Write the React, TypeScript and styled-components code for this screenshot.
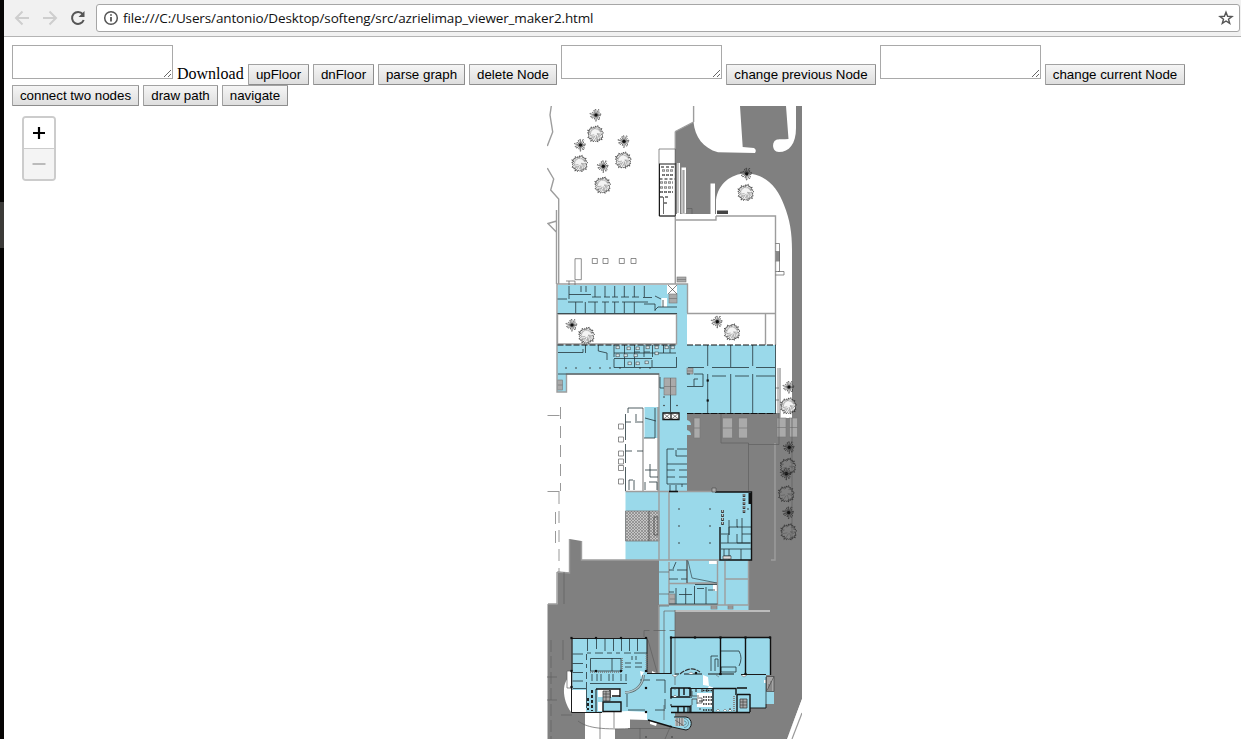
import React from "react";
import styled, { createGlobalStyle } from "styled-components";

const GlobalStyle = createGlobalStyle`
  * { box-sizing: border-box; }
  body { margin: 0; background: #fff; overflow: hidden; }
`;

const Desktop = styled.div`
  display: flex;
  width: 1241px;
  height: 739px;
  overflow: hidden;
`;
const DesktopEdge = styled.div`
  width: 4px;
  flex: none;
  background: linear-gradient(#060504 202px, #3b3a38 202px, #3b3a38 248px, #060504 248px);
`;
const Browser = styled.div`
  flex: 1;
  min-width: 0;
  display: flex;
  flex-direction: column;
`;
const AddressBar = styled.header`
  display: flex;
  align-items: center;
  height: 37px;
  flex: none;
  padding: 0 1px 1px 10px;
  background: #f1f1f1;
  border-bottom: 1px solid #b4b4b4;
`;
const NavIcon = styled.svg<{ $gap: number }>`
  width: 16px;
  height: 16px;
  flex: none;
  margin-right: ${(p) => p.$gap}px;
`;
const UrlBox = styled.div`
  display: flex;
  align-items: center;
  flex: 1;
  height: 28px;
  padding: 0 5px 0 6px;
  background: #fff;
  border: 1px solid #a6a6a6;
  border-radius: 3px;
`;
const Url = styled.span`
  flex: 1;
  margin-left: 4px;
  font: 13.5px/20px "Open Sans", sans-serif;
  letter-spacing: -0.13px;
  color: #111;
  white-space: nowrap;
`;
const Page = styled.main`
  flex: 1;
  min-height: 0;
  padding: 8px 8px 0;
`;
const Controls = styled.div<{ $h: number }>`
  display: flex;
  gap: 4px;
  align-items: flex-end;
  height: ${(p) => p.$h}px;
`;
const Field = styled.textarea`
  width: 161px;
  height: 34px;
  margin: 0 0 6px;
  padding: 2px;
  border: 1px solid #a9a9a9;
  border-radius: 0;
  background: #fff;
`;
const DownloadLabel = styled.span`
  width: 67px;
  padding-bottom: 1px;
  font: 16px/20px "Liberation Serif", serif;
  color: #000;
`;
const Button = styled.button<{ $w: number }>`
  width: ${(p) => p.$w}px;
  height: 21px;
  padding: 0;
  border: 1px solid #a2a2a2;
  border-right-color: #8d8d8d;
  border-bottom-color: #8d8d8d;
  border-radius: 1px;
  background: linear-gradient(#f5f5f5, #dedede);
  font: 13.33px/18px "Liberation Sans", sans-serif;
  color: #000;
  white-space: nowrap;
`;
const MapPane = styled.section`
  position: relative;
  height: 633px;
  padding-left: 535px;
`;
const Plan = styled.svg`
  display: block;
  width: 255px;
  height: 633px;
`;
const ZoomControl = styled.div`
  position: absolute;
  left: 10px;
  top: 10px;
  width: 34px;
  height: 65px;
  border: 2px solid #ccc;
  border-radius: 4px;
  background: #fff;
  overflow: hidden;
`;
const ZoomButton = styled.div<{ $off?: boolean }>`
  display: flex;
  align-items: center;
  justify-content: center;
  height: ${(p) => (p.$off ? 30 : 31)}px;
  border-bottom: ${(p) => (p.$off ? "none" : "1px solid #ccc")};
  background: ${(p) => (p.$off ? "#f4f4f4" : "#fff")};
  color: ${(p) => (p.$off ? "#bbb" : "#000")};
`;

const BLUE = "#9ad9ea";
const GRAY = "#808080";

type Spot = [number, number];

/* Palm: a dense burst of thin fronds around a dark heart. */
const Palm = ({ at: [x, y] }: { at: Spot }) => {
  let d = "";
  for (let i = 0; i < 14; i++) {
    const a = (i * Math.PI * 2) / 14 + 0.2;
    const r = 4.4 + ((i * 5) % 4) * 0.6;
    const bend = i % 2 ? 1.9 : -1.9;
    d += `M${x} ${y}L${(x + Math.cos(a) * r).toFixed(1)} ${(y + Math.sin(a) * r).toFixed(1)}l${(Math.cos(a + bend) * 1.1).toFixed(1)} ${(Math.sin(a + bend) * 1.1).toFixed(1)}`;
  }
  return (
    <g>
      <path d={d} stroke="#222" strokeWidth=".6" />
      <circle cx={x} cy={y} r="1.6" fill="#111" />
    </g>
  );
};

/* Leafy tree: ragged crown, shaded towards the lower right. */
const Tree = ({ at: [x, y], clear }: { at: Spot; clear?: boolean }) => {
  let rim = "";
  let shade = "";
  for (let i = 0; i < 22; i++) {
    const a = (i * Math.PI * 2) / 22;
    const outer = 7.4 + ((i * 7) % 5) * 0.35;
    const inner = 5.6 + ((i * 3) % 4) * 0.5;
    const c = Math.cos(a);
    const s = Math.sin(a);
    rim += `M${(x + c * inner).toFixed(1)} ${(y + s * inner).toFixed(1)}L${(x + Math.cos(a + 0.15) * outer).toFixed(1)} ${(y + Math.sin(a + 0.15) * outer).toFixed(1)}L${(x + Math.cos(a + 0.25) * 6.8).toFixed(1)} ${(y + Math.sin(a + 0.25) * 6.8).toFixed(1)}`;
    if (!clear || i % 3 === 0) {
      const depth = a < 2.6 || a > 5.8 ? 1.5 + (i % 3) : 4.8;
      shade += `M${(x + c * depth).toFixed(1)} ${(y + s * depth).toFixed(1)}L${(x + Math.cos(a + 0.3) * 6).toFixed(1)} ${(y + Math.sin(a + 0.3) * 6).toFixed(1)}`;
    }
  }
  return (
    <g>
      <circle cx={x} cy={y} r="6.8" fill={clear ? "none" : "#f4f4f4"} />
      <path d={rim} stroke="#2a2a2a" strokeWidth=".7" />
      <path d={shade} stroke={clear ? "#555" : "#777"} strokeWidth=".5" />
    </g>
  );
};

const palms: Spot[] = [[596, 115], [580.5, 145], [624, 141.3], [603.3, 166.3], [746.7, 173.8], [572, 325], [717.3, 321.7], [789, 387], [789.3, 447.3], [786.3, 473.7], [788.7, 512.5]];
const trees: Spot[] = [[595.5, 134], [579.7, 163.7], [623.3, 160.3], [602.7, 185.3], [745.8, 192.7], [586.6, 335.5], [732, 332.2], [788.5, 406]];
const clearTrees: Spot[] = [[788, 466.5], [786.3, 494], [788.7, 532]];

const ground = [
  "M693.5 122L675.3 131.5V216H716V200C718 184 731 173.5 746 173.5C766 173.5 778 188 784 205C790 220 792 233 792 250V418H780V413H687V492H752V560H581.5V541L569.7 539V573L557.5 571.5V604H547.5V739H787L802 699V106H796V128C796 144 789 152 779 152C773 152 772 145 774 142C776 138 781 140 788.5 139L786 106H740L742.7 147L754 148Q757 150 755 153L718 152.3C703 148 695 137 693.5 122Z",
];
const blue = [
  "M557.5 285H667V294H677V284H687V345H775.5V413H687V492H752V560H748.5V610H675V673H671V637H771V675H766V691H774V704H766V708H750V712.5H692L675 713V717H686C693 718 693 729 686 730L672 727L647 720V712H586V690H572.5V639H647V673H659V374H566.5V392H557V345H677V314H557.5Z",
  "M625.5 491.5H659V560H625.5Z",
  "M644.5 407H658V438H644.5Z",
  "M687 420Q691 421 691 425H687ZM687 430Q691 431 691 435H687Z",
];
const paleFloor = [
  "M659 149H675.5V216H659ZM677 163H680V214H677ZM681.5 167.5H686V213.5H681.5ZM710.5 183.5H715V214H710.5ZM675.5 214H716V220H675.5Z",
  "M625.5 407H658V491H625.5Z",
];
const paleRooms = [
  "M572 690H586V712H572Z",
  "M571.5 676C561 680 562 700 571 712Z",
  "M585 713L628 711L647 712V720L630 719.5V729H615V740H585Z",
  "M567 671H572V688H567ZM668 285H677V294H668ZM661.5 298H667V307H661.5ZM709 561H717V564H709ZM713 584H718V591H713Z",
  "M703 675L708 677L709 686L703 685ZM640 671L644 672L641 677ZM650 721L657 723L656 726L650 724ZM598 702H603V711H598ZM598 689H621V697H598Z",
  "M697 693H712V707H697ZM652 671L656 673H652ZM709 686L714 688H708ZM764 680H766V683H764Z",
];
const lightWalls = [
  "M551.3 106L550 115L552.7 132L547.3 146M547.3 168L553.7 179L550.7 190L558.7 199V284M556.5 210V284M556.7 221L548 223.5L556.3 232",
  "M675.3 131.5V284M693.6 106V122M693.5 122L675.3 131.5M716 216H775.5V313.5M675.5 220H716V216M687 313.5H775.5V345M765.5 313.5V345",
  "M557.5 314H676.5V344H557.5ZM557 284H687.5V313M557 284V392H566.5V374H659V560H581.5M780 368V418M658 407V491M643 408V491",
  "M775 443V560H771M669 492V560M625.5 491.5H715M625.5 560H720M725 561V605H748.5V561M725 579H748.5M669 562V605M717.5 561V605M687 560V583H717M669 583.5H717",
  "M659 605H748M659 605V673M557.5 572L569.5 573V539M557 572V604H548M581.5 541V560H625",
];
const thinWalls = [
  "M659 149H675.5V216H659ZM575 258.7H581.3V279.7H575ZM592.3 258.5h5v5h-5zM603 258.5h5v5h-5zM619.3 258.5h5v5h-5zM631 258.5h5v5h-5z",
  "M775.5 243.5H779.5V271.5H775.5M775.5 251.5H779.5V261H775.5M778 271.5H784V275H775.5M678 163V213M684 170V213M683 170V213M687 208.5H692V214",
  "M566 281H575V285M569 281V285M618.5 424h5v5h-5zM618.5 437h5v5h-5zM618.5 451h5v5h-5zM618.5 459h5v5h-5zM618.5 465.5h5v5h-5zM618.5 479h5v5h-5z",
  "M547 677H557M547 700H557M563 640V660M648 640L657 672M578 721C586 727 598 730 630 728.5M600 712V739M614 712V728M664 611V673M675 610V673M567 671H572M567 671V688H572",
  "M564 572V604M671 725L665 739M721 413V443H748.5V491M748.5 444.5H779V413M778 368V413M775.5 388H779M775.5 400H779M792 418V540",
  "M628 728.5H671M640 728V739M659 594H669M659 572H669M659 606H669M664 705V720M787 739L802 703",
];
const roomWalls = [
  "M557.5 299H567M569 286V299M569 294.5H591M581 286V292M586 286V292M595 286V297M605 286V297M614.7 286V297M624.3 286V297M634.3 286V297M644.3 286V297",
  "M592 297H601M604 297H610M612 297H618M621 297H629M632 297H639M643 297.5H652M568 302H583M588 302H598M602 302H609M612 302H619M622 302H648M575.7 302V313M585.3 302V313M595 302V313M605 302V313M614.7 302V313M624.3 302V313M634.3 302V313M644 304H655M655 310L658 307H677M655 296L661 299M655 304V311M663 300V307M557.5 313.5H677",
  "M558 352.5H583V349M585.5 345V353M598.3 345V351L607 353V360M614 345V357M624.5 345V367M634.5 345V367M644 345V357M652.5 345V357M663.5 345V353M670 345V353M614 353H676M614 358.5H652M614 359V367.5H676.5V357M644 352H650M634 352H640M652 360V367M558 374H659",
  "M707.7 345V366M730.7 345V367M752.7 345V366M707.7 374V413M730.7 374V413M752.7 374V413M688 367.5H704M712 367.5H749M756 367.5H775M687 374H690M694 374H703V386.5H687M694 379V386M694 379H698M712 376H726M735 376H749M756 376H775M687 413.5H775.5V345",
  "M660 377V388H664M670.5 395V412M667 449H674M677 449H687M667 449V484H687M667 464H687M667 470H675M679 470H687M667 477H675M679 477H687M676 450V456H687M670 485V491M676 485V491M682 484V487",
  "M625.5 414V440M625.5 444V463M625.5 467V491M625.5 422H631M635 422H643M625.5 451H632M637 451H643M636 414V421M628 413V408H643M645 418L656 421M644 438H655V408M645 470H657M650 464V477H658M649 482H657V490M629 480V490M634 480V490M645 482V490M629 480H633",
  "M669 570H674M677 570H687M669 579H678M681 579H687M676 562L673 569M669 592H674M676 588V604M685.7 588V604M694.5 586V604M706 587V604M679 594.5H692M697 588.5H704M708 590H715M695 584.5H717M669 604H717.5M687 560V583",
  "M737 519V527H752M729 527V535M742 518V534H752M729 520V535M729 527H738M721 534H729M737 534V543H752M742 534V543M721 543H750M728 535V543M741 549V560M729 549V560M721 549H752M724 549V556H731",
  "M587.5 639V651M596.5 639V649M605 639V651M613.5 639V651M621.5 639V651M629.5 639V651M637.5 639V651M587 653H591M595 653H603M607 653H612M616 653H620M624 653H631M634 653H647M572.5 654H583M572.5 663.5H583M572.5 672.5H583M572.5 681H583M586.5 654V660M586.5 664V668M586.5 672V679M586.5 682V708",
  "M590.5 658.5H621V671H590.5ZM612 658V671M625 663H631M625 667H631M635 663H642M635 667H642M632 656V660M636 656V660",
  "M592 674V681M597 674V681M601 674V681M609 674V681M613 674V681M621 674V681M626 674V681M590 683.5H627",
  "M640 680H650M656 680H665V693M665 699V709M655 710H665M628 710H645M627 694V707M573 688.5H586",
  "M720.5 651H739Q743 658 739 666M711 656V671M711 656H718M715 659H718V667M715 659V671M721 667H736V672H721ZM766 677V704",
];
const heavyWalls = [
  "M715 492H751.5V560H720V527M669 491.5H678M671 674V637.5H770.5V675M745.5 638V675M720.5 638V675",
  "M596 689H620V697M603 702H621V711.5H603ZM610 690V698M612 696H620M671 688H690V696M671 688V697H690M679 688V696M684 688V695M671 706.5H690V712M678 706V712M684 706V712",
  "M713 688.5H736V695M713 688.5V712.5H737M671 712.5H750M737 694.5H750M737 688H747M750 694V712M737 695V712M648 720L672 727",
];
const mediumWalls = [
  "M659.5 164V216H675M676 164H659M572 638.5H647V672M572 638.5V671M571.5 671V712.5H602M596 689V712M688 688.5H713M688 712V706M647 673.5H671M675 674H679M684 674H702M708 674H734M741 674.5H766M766 704V708H750M696 689V692M702 689V692M707 689V692M691 688V698M691 705V712M699 701H703M671 697V699M671 704V706M674 717H686C693 718 693 729 686 730L672 727",
];

const columns: Spot[] = [[679, 509], [710, 509], [679, 526], [710, 526], [679, 543], [710, 543], [664, 405.5], [677, 405.5], [664, 397], [646, 737], [672, 737], [590, 368], [600, 368], [610, 368], [620, 368], [576, 368], [566, 368], [640, 368], [650, 368], [748, 509], [700, 709], [730, 709]];
const piers: Spot[] = [[571.5, 638], [596, 638], [621, 638], [646, 638], [671, 637.5], [695, 637.5], [720.5, 637.5], [745.5, 637.5], [770, 637.5], [571.5, 671], [596, 671], [621, 671], [646, 671], [571.5, 687], [646, 688], [646, 712], [696, 673], [720.5, 674], [745.5, 674], [707.7, 380.5], [707.7, 400.5]];
const fixtures: Spot[] = [[616, 346], [627, 347], [636, 347], [646, 346], [655, 346], [665, 346], [671, 346], [628, 362], [636, 362], [645, 361], [616, 354], [624, 354], [634, 354], [655, 352]];
const lots: [number, number, number, number][] = [[694, 418, 6, 20], [722.5, 418, 10, 20], [738.5, 418, 9, 20], [777, 418, 9, 19], [789.5, 418, 8, 19], [664, 378, 12, 17], [687, 368, 6, 6], [557.5, 380, 5, 10], [669, 594, 6, 10], [669, 294, 8, 9], [677, 277, 9, 5], [711, 605, 6, 4], [728, 605, 5, 4]];

const Fills = ({ shapes, color }: { shapes: string[]; color: string }) => (
  <>
    {shapes.map((d) => <path key={d} d={d} fill={color} />)}
  </>
);

function FloorPlan() {
  return (
    <Plan viewBox="547 106 255 633" fill="none">
      <defs>
        <pattern id="grate" width="3" height="3" patternUnits="userSpaceOnUse">
          <rect width="3" height="3" fill="#c6c6c6" />
          <path d="M0 0L3 3M3 0L0 3" stroke="#777" strokeWidth=".6" />
        </pattern>
      </defs>
      <Fills shapes={ground} color={GRAY} />
      <path d="M659 559H802V640H659Z" fill={GRAY} />
      <path d="M659 603H760V740H659Z" fill={GRAY} />
      <Fills shapes={paleFloor} color="#fff" />
      <Fills shapes={blue} color={BLUE} />
      <Fills shapes={paleRooms} color="#fff" />
      <path d="M675 611H770" stroke="#d0d0d0" strokeWidth="1.3" />
      <path d="M664 611H675" stroke="#777" strokeWidth=".8" />
      <path d="M625.5 511H659V541H625.5Z" fill="url(#grate)" stroke="#777" strokeWidth=".8" />
      <path d="M649 511V541M654 517H658V535H654Z" stroke="#444" strokeWidth=".8" />
      {lots.map(([x, y, w, h]) => (
        <g key={`${x}-${y}`}>
          <rect x={x} y={y} width={w} height={h} fill="#aaa" stroke="#777" strokeWidth=".6" />
          <path d={`M${x} ${y + h / 2}h${w}`} stroke="#777" strokeWidth=".7" />
        </g>
      ))}
      <path d="M670.5 378V395" stroke="#666" strokeWidth=".8" />
      <path d={lightWalls.join("")} stroke="#9d9d9d" strokeWidth="1.4" />
      <path d={thinWalls.join("")} stroke="#5e5e5e" strokeWidth=".7" />
      <path d={roomWalls.join("")} stroke="#25363b" strokeWidth=".8" />
      <path d={mediumWalls.join("")} stroke="#1a1a1a" strokeWidth="1" />
      <path d={heavyWalls.join("")} stroke="#111" strokeWidth="1.4" />
      <path d="M560.5 407V491M547.5 415.5H561M547.5 491.5H561M559 492V572M555.5 512V545" stroke="#999" strokeWidth="1" strokeDasharray="12 7" />
      <path d="M551 640V739M644 637V630.5H675M561 715H572M675 673V690" stroke="#5e5e5e" strokeWidth=".7" strokeDasharray="12 4" />
      <path d="M687 345H775.5M687 413.5H775.5M557.5 345H676" stroke="#111" strokeWidth="1.2" strokeDasharray="6 2" />
      <path d="M663 413H671V419.5H663ZM671 413H679V419.5H671Z" fill="#fff" stroke="#111" strokeWidth="1.3" />
      <path d="M663 413L671 419.5M671 413L663 419.5M671 413L679 419.5M679 413L671 419.5M668 285L677 294M677 285L668 294" stroke="#333" strokeWidth=".6" />
      <path d="M662 170.5H673M662 175H673M660 182.5H673M660 187.5H673M660 192H673" stroke="#555" strokeWidth="2" strokeDasharray="3 1" />
      <path d="M662 170.5H673M662 175H673M660 182.5H673M660 187.5H673M660 192H673" stroke="#ddd" strokeWidth=".8" strokeDasharray="2 2" strokeDashoffset="-.5" />
      <path d="M660 197H670M664 203H669M661 167H675M659.5 179H675" stroke="#111" strokeWidth="1.2" strokeDasharray="3 2" />
      <path d="M675.5 164V216M663.5 197V214" stroke="#444" strokeWidth=".8" />
      <path d="M717 210.5H728V214H717Z" fill="#444" />
      <path d="M775.5 252H779V261H775.5Z" fill="#888" />
      <path d="M744 494V513M722.5 510V526" stroke="#333" strokeWidth="2.5" strokeDasharray="3 1" />
      <path d="M744 494V513M722.5 510V526" stroke="#bbb" strokeWidth="1" strokeDasharray="2 2" />
      <path d="M750 493V504" stroke="#111" strokeWidth="3" />
      <path d="M723 556H731V559H723Z" fill="#ddd" stroke="#333" strokeWidth=".6" />
      <path d="M712 488h4v4h-4z" fill="#aaa" stroke="#444" strokeWidth=".6" />
      <path d="M688 561L692 578L717 583" stroke="#35474d" strokeWidth=".7" />
      <path d="M643.5 675C643 685 636 692 625 692.5" stroke="#566" strokeWidth="2.6" />
      <path d="M643.5 675C643 685 636 692 625 692.5" stroke="#aec4cb" strokeWidth="1.3" />
      <path d="M622 658V671M646.5 654V671M590 672H622" stroke="#777" strokeWidth="1.6" strokeDasharray="1 1" />
      <path d="M603 691H610V701H603ZM740 699H747V708H740Z" fill="#aaa" stroke="#333" strokeWidth=".7" />
      <path d="M603 694H610M603 697H610M740 702H747M740 705H747M743 699V708M606 691V701" stroke="#333" strokeWidth=".6" />
      <path d="M766.5 676.5H774V691.5H766.5Z" fill="#a6a6a6" stroke="#444" strokeWidth=".7" />
      <path d="M766.5 691.5L774 676.5M769 691V684M771 691V681" stroke="#444" strokeWidth=".6" />
      <path d="M675 718H684V726H675Z" fill="#bdbdbd" />
      <path d="M677 718V726M679.5 718V726M682 718V726M675 720L684 726" stroke="#444" strokeWidth=".6" />
      <path d="M684 718.5C690 718.5 690 727.5 684 727.5M684 721C687 721 687 725 684 725" stroke="#55737c" strokeWidth=".7" />
      <path d="M680 674Q691 665 700 672" stroke="#333" strokeWidth="1.2" strokeDasharray="5 1" />
      <path d="M592 690V711M588 698V710" stroke="#222" strokeWidth="2" strokeDasharray="3 2" />
      <path d="M703 690.5H712M703 697H712M703 700H712M703 704H712M703 710H712" stroke="#222" strokeWidth="1.5" strokeDasharray="1.5 1" />
      <path d="M692 691V696H699M692 705V699H697V704M697 698H702V703H697" stroke="#333" strokeWidth=".7" />
      <path d="M672 675l3 2 3-2M741 675l3 2 3-2M716 711l2 -2 2 2M723 711l2-2 2 2M728 711l2-2 2 2M673 697l2-2 2 2M688 674l3-2 3 2M716 675l3 2" fill="#fff" stroke="#555" strokeWidth=".5" />
      <path d="M734 696V711" stroke="#888" strokeWidth="2" strokeDasharray="1 1" />
      {columns.map(([x, y]) => <circle key={`${x}-${y}`} cx={x} cy={y} r=".8" fill="#333" />)}
      {piers.map(([x, y]) => <rect key={`${x}-${y}`} x={x - 1.1} y={y - 1.1} width="2.2" height="2.2" fill="#111" />)}
      {fixtures.map(([x, y]) => <rect key={`${x}-${y}`} x={x} y={y} width="3.2" height="2.8" fill="#d8eaef" stroke="#333" strokeWidth=".5" />)}
      {palms.map((p) => <Palm key={p.join()} at={p} />)}
      {trees.map((p) => <Tree key={p.join()} at={p} />)}
      {clearTrees.map((p) => <Tree key={p.join()} at={p} clear />)}
      <path d="M787 739L802 699V739Z" fill="#fff" />
      <path d="M792 739L802 713" stroke="#999" strokeWidth="1.2" />
    </Plan>
  );
}

export default function App() {
  return (
    <Desktop>
      <GlobalStyle />
      <DesktopEdge />
      <Browser>
        <AddressBar>
          <NavIcon $gap={12} viewBox="0 0 16 16" fill="none" stroke="#cecece" strokeWidth="2">
            <path d="M15 8H3M8.5 1.5L2 8L8.5 14.5" />
          </NavIcon>
          <NavIcon $gap={12} viewBox="0 0 16 16" fill="none" stroke="#cecece" strokeWidth="2">
            <path d="M1 8H13M7.5 1.5L14 8L7.5 14.5" />
          </NavIcon>
          <NavIcon $gap={10} viewBox="0 0 16 16" fill="none" stroke="#555" strokeWidth="2">
            <path d="M12.8 4.2A6 6 0 1 0 13.7 10" />
            <path d="M14.5 1V7H8.5Z" fill="#555" stroke="none" />
          </NavIcon>
          <UrlBox>
            <NavIcon $gap={0} viewBox="0 0 16 16" fill="none" stroke="#555" strokeWidth="1.5">
              <circle cx="8" cy="8" r="6.3" />
              <path d="M8 7V11.5M8 4.2V5.8" strokeWidth="1.8" />
            </NavIcon>
            <Url>file:///C:/Users/antonio/Desktop/softeng/src/azrielimap_viewer_maker2.html</Url>
            <NavIcon $gap={0} viewBox="0 0 16 16" fill="none" stroke="#555" strokeWidth="1.4">
              <path d="M8 2.2L9.6 6.3L14 6.5L10.5 9.2L11.7 13.4L8 11L4.3 13.4L5.5 9.2L2 6.5L6.4 6.3Z" />
            </NavIcon>
          </UrlBox>
        </AddressBar>
        <Page>
          <Controls $h={40}>
            <Field />
            <DownloadLabel>Download</DownloadLabel>
            <Button $w={61}>upFloor</Button>
            <Button $w={61}>dnFloor</Button>
            <Button $w={87}>parse graph</Button>
            <Button $w={88}>delete Node</Button>
            <Field />
            <Button $w={150}>change previous Node</Button>
            <Field />
            <Button $w={140}>change current Node</Button>
          </Controls>
          <Controls $h={21}>
            <Button $w={127}>connect two nodes</Button>
            <Button $w={75}>draw path</Button>
            <Button $w={66}>navigate</Button>
          </Controls>
          <MapPane>
            <FloorPlan />
            <ZoomControl>
              <ZoomButton>
                <svg width="14" height="14" viewBox="0 0 14 14"><path d="M1 7H13M7 1V13" stroke="currentColor" strokeWidth="2.2" /></svg>
              </ZoomButton>
              <ZoomButton $off>
                <svg width="14" height="14" viewBox="0 0 14 14"><path d="M.5 7H13.5" stroke="currentColor" strokeWidth="2" /></svg>
              </ZoomButton>
            </ZoomControl>
          </MapPane>
        </Page>
      </Browser>
    </Desktop>
  );
}
